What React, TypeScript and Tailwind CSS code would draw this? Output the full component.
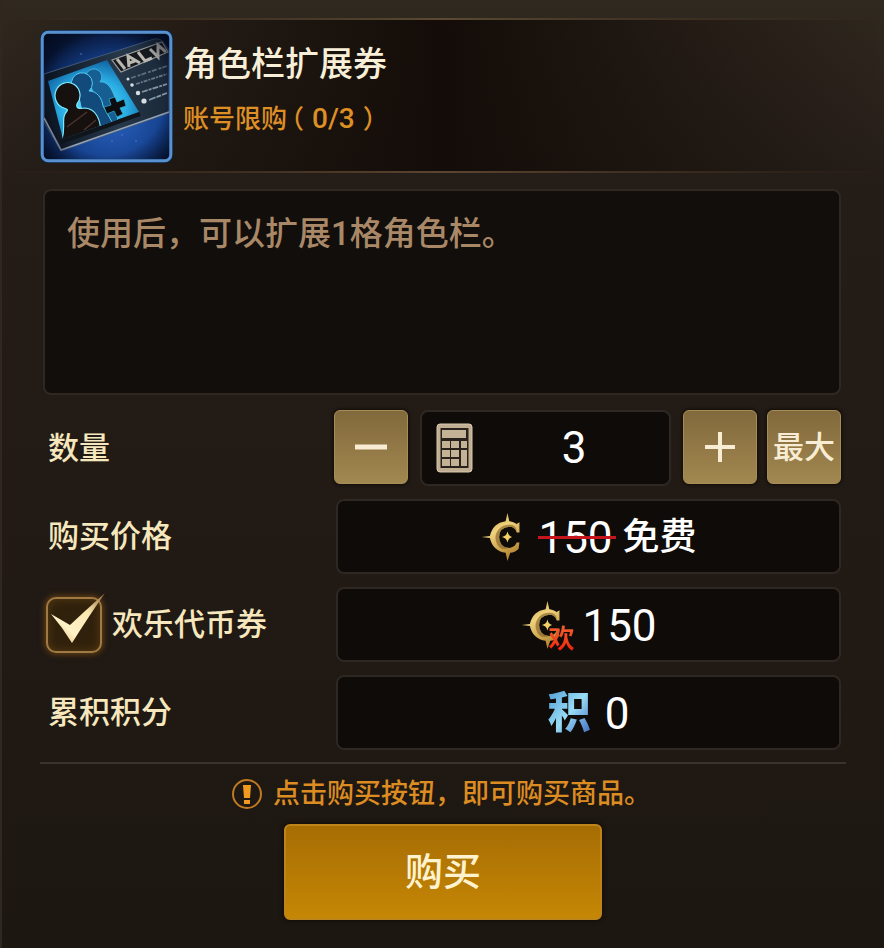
import { useState } from "react";
import type { ReactNode } from "react";

const UNIT_PRICE = 50;
const MAX_QUANTITY = 3;

function TicketArt() {
  return (
    <svg viewBox="0 0 133 133" className="size-[133px] shrink-0" role="img" aria-label="角色栏扩展券">
      <defs>
        <radialGradient id="ticketSky" cx="0.55" cy="0.65" r="0.7">
          <stop offset="0" stopColor="#2a63c0" />
          <stop offset="0.6" stopColor="#15408c" />
          <stop offset="1" stopColor="#071433" />
        </radialGradient>
        <radialGradient id="ticketPhoto" cx="0.5" cy="0.6" r="0.65">
          <stop offset="0" stopColor="#6be6ff" />
          <stop offset="0.55" stopColor="#2aaee4" />
          <stop offset="1" stopColor="#0d5798" />
        </radialGradient>
        <linearGradient id="ticketCard" x1="0" y1="0" x2="1" y2="0">
          <stop offset="0" stopColor="#0b1320" />
          <stop offset="0.6" stopColor="#26384a" />
          <stop offset="1" stopColor="#1a2838" />
        </linearGradient>
        <radialGradient id="ticketShade" cx="0.5" cy="0.5" r="0.72">
          <stop offset="0.65" stopColor="#020818" stopOpacity="0" />
          <stop offset="1" stopColor="#020818" stopOpacity="0.85" />
        </radialGradient>
        <clipPath id="ticketClip">
          <rect x="4" y="4" width="125" height="125" rx="4" />
        </clipPath>
        <clipPath id="photoClip">
          <path d="M8 51 L67 30 L99 82 L23 109 Z" />
        </clipPath>
      </defs>
      <rect x="0" y="0" width="133" height="133" rx="8" fill="#0a2547" />
      <rect x="4" y="4" width="125" height="125" rx="4" fill="url(#ticketSky)" />
      <g clipPath="url(#ticketClip)">
        <path d="M4 44 L114 9 Q121 8 124 13 L129 20 V83 L21 121 L4 92 Z" fill="url(#ticketCard)" stroke="#40587a" strokeWidth="1" />
        <path d="M8 51 L67 30 L99 82 L23 109 Z" fill="url(#ticketPhoto)" />
        <path d="M4 88 L21 120 L129 82" fill="none" stroke="#93a3b4" strokeWidth="1.6" />
        <path d="M21 112 L100 84" fill="none" stroke="#10151c" strokeWidth="4" />
        <g clipPath="url(#photoClip)">
          <path d="M50 54 A8 8 0 1 1 60 52 C67 51 72 58 75 68 L78 94 L62 98 L56 70 Z" fill="#175f93" stroke="#49bfe8" strokeWidth="0.8" />
          <path d="M38 63 A10.500 10.500 0 1 1 49 61 C57 61 62 68 63 76 L72 92 L62 104 L44 90 Z" fill="#124a7c" stroke="#54cdf2" strokeWidth="1" />
          <path d="M21 112 C27 98 20 88 27 81 C28 80 27 79 24 78 A12.500 13 0 1 1 37 74 C36 78 38 79 45 78 C56 79 61 89 61 106 L61 112 Z" fill="#16100f" stroke="#7cecff" strokeWidth="1.2" />
          <path d="M27 97 L47 82 M44 100 L56 90" stroke="#4a3430" strokeWidth="1.5" />
        </g>
        <path d="M69 69 L75 67 L77 72 L84 69 L86 76 L80 78 L83 84 L77 87 L74 81 L67 84 L64 77 L71 75 Z" fill="#0b0d10" stroke="#2fb5d8" strokeWidth="0.7" />
        <path d="M72 30 L122 12 L128 22 L81 42 Z" fill="#15191e" stroke="#9fa2a0" strokeWidth="1.2" />
        <g fill="none" stroke="#b9b7b0" strokeWidth="3">
          <path d="M77 29 L85 39" />
          <path d="M89 37 L88 26 L100 33 M89 33 L95 31" />
          <path d="M98 22 L105 31 L112 28" />
          <path d="M110 19 L118 27 L118 15 L126 22" />
        </g>
        <g fill="none" stroke="#8396a6" strokeWidth="1.800">
          <path d="M91 48 L127 36" strokeDasharray="5 2 3 1" opacity="0.6" />
          <path d="M96 54 L127 44" strokeDasharray="4 1 2 1" opacity="0.7" />
          <path d="M102 62 L127 54" strokeDasharray="6 1 3 1" />
          <path d="M109 70 L127 63" strokeDasharray="7 1 5 1" />
        </g>
        <g fill="#d8dee2">
          <circle cx="88" cy="49" r="1.500" />
          <circle cx="92" cy="55" r="1.800" />
          <circle cx="98" cy="63" r="2.200" />
          <circle cx="104" cy="71" r="2.600" />
        </g>
        <rect x="4" y="4" width="125" height="125" fill="url(#ticketShade)" />
        <g fill="#4e83da">
          <circle cx="41" cy="24" r="0.8" />
          <circle cx="96" cy="111" r="0.8" />
          <circle cx="72" cy="111" r="0.7" />
          <circle cx="82" cy="105" r="0.7" />
        </g>
      </g>
      <rect x="2.2" y="2.2" width="128.6" height="128.6" rx="6" fill="none" stroke="#5991cf" strokeWidth="3" />
    </svg>
  );
}

function CoinShape() {
  return (
    <svg viewBox="0 0 42 52" className="h-[48px] w-[42px]" aria-hidden="true">
      <defs>
        <linearGradient id="coinGold" x1="0" y1="0" x2="0.5" y2="1">
          <stop offset="0" stopColor="#b98d40" />
          <stop offset="0.45" stopColor="#efd27c" />
          <stop offset="1" stopColor="#b98a35" />
        </linearGradient>
      </defs>
      <path d="M28 0 L30 9 Q36 10 38 12 L41 10 V21 L38 21 Q36 15 30 15 Q19 16 19 26 Q19 37 30 38 Q36 37 38 32 L41 32 L40 39 Q36 43 31 43 L28 52 L26 43 Q12 41 9 27 L0 26 L9 25 Q12 11 26 9 Z" fill="url(#coinGold)" />
      <path d="M19 17 Q24 12 33 13 Q38 15 38 20 Q35 15 30 15 Q19 16 19 26 Q19 37 30 38 Q21 41 17 34 Q12 25 19 17 Z" fill="#7d5a22" opacity="0.6" />
      <path d="M28 20 Q29 25 33 26 Q29 27 28 32 Q27 27 22 26 Q27 25 28 20 Z" fill="#f2d067" />
    </svg>
  );
}

function CalculatorIcon() {
  return (
    <svg viewBox="0 0 37 50" className="h-[50px] w-[37px]" aria-hidden="true">
      <rect x="1" y="1" width="35" height="48" rx="3" fill="#bfae92" stroke="#d8c9ad" strokeWidth="1" />
      <rect x="4.500" y="5" width="28" height="40" fill="#29211b" />
      <g fill="#c3b296">
        <rect x="6" y="7" width="24" height="8" />
        <rect x="6" y="18" width="8" height="7" />
        <rect x="15" y="18" width="8" height="7" />
        <rect x="25" y="18" width="6" height="7" />
        <rect x="6" y="27" width="8" height="7" />
        <rect x="15" y="27" width="8" height="7" />
        <rect x="25" y="27" width="6" height="16" />
        <rect x="6" y="36" width="8" height="7" />
        <rect x="15" y="36" width="8" height="7" />
      </g>
    </svg>
  );
}

function StepButton({ label, onClick, children }: { label: string; onClick: () => void; children: ReactNode }) {
  return (
    <button
      type="button"
      aria-label={label}
      onClick={onClick}
      className="flex size-[74px] shrink-0 items-center justify-center rounded-md border border-[#a68c58] bg-linear-to-b from-[#82693c] to-[#a18850] text-[31px] font-medium text-[#f8edd4] shadow-[0_0_3px_1px_#120d07]"
    >
      {children}
    </button>
  );
}

function ValueBox({ children }: { children: ReactNode }) {
  return (
    <div className="flex h-[75px] items-center justify-center rounded-lg border-2 border-[#2f2721] bg-[#0e0b09] text-white">
      {children}
    </div>
  );
}

function Amount({ children }: { children: ReactNode }) {
  return <span className="block pt-[2px] text-[44px] leading-[50px] font-normal">{children}</span>;
}

export default function App() {
  const [quantity, setQuantity] = useState(3);
  const [useTicket, setUseTicket] = useState(true);
  const clamp = (n: number) => Math.min(MAX_QUANTITY, Math.max(1, n || 1));
  const total = quantity * UNIT_PRICE;

  return (
    <main className="min-h-screen border-l-2 border-[#302820] bg-linear-to-b from-[#30291f] via-[#241c17] via-20% to-[#1d1712] pt-[18px] pb-6 font-[Roboto,'Noto_Sans_CJK_SC',sans-serif] text-[#f6e7bd]">
      <header className="bg-linear-to-r from-transparent via-[#140c08] via-50% to-transparent">
        <div className="h-[2px] bg-linear-to-r from-transparent via-[#5c4a33] to-transparent" />
        <div className="flex gap-[10px] px-[38px] pt-[10px] pb-2">
          <TicketArt />
          <div className="pt-2">
            <h1 className="text-[34px] leading-[52px] font-medium text-[#f7efd8]">角色栏扩展券</h1>
            <p className="flex items-baseline pt-2 text-[26px] leading-[42px] font-medium text-[#dd8f25] [font-feature-settings:'halt']">
              <span>账号限购</span>
              <span className="ml-1">（</span>
              <span className="mx-2 text-[28px]">0/3</span>
              <span>）</span>
            </p>
          </div>
        </div>
        <div className="h-[2px] bg-linear-to-r from-transparent via-[#5c4530] to-transparent" />
      </header>

      <section className="mt-4 mr-[43px] ml-[41px] h-[206px] rounded-lg border-2 border-[#2f2822] bg-[#110e0b] px-[22px] pt-[18px]">
        <p className="text-[33px] leading-[50px] font-medium text-[#a98868]">使用后，可以扩展1格角色栏。</p>
      </section>

      <form onSubmit={(e) => e.preventDefault()} className="mt-[15px]">
        <div className="mr-[43px] ml-[41px] grid grid-cols-[287px_1fr] items-center gap-x-[6px] gap-y-[13px] text-[31px] font-medium">
          <label htmlFor="quantity" className="pt-[2px] pl-[5px]">
            数量
          </label>
          <div className="-ml-[2px] flex">
            <StepButton label="减少" onClick={() => setQuantity(clamp(quantity - 1))}>
              <svg viewBox="0 0 32 32" className="size-8" aria-hidden="true">
                <path d="M0 16 H32" stroke="currentColor" strokeWidth="5" />
              </svg>
            </StepButton>
            <div className="mx-3 flex h-[76px] min-w-0 flex-1 items-center rounded-lg border-2 border-[#2f2721] bg-[#0e0b09] pl-[14px]">
              <button type="button" aria-label="输入数量" className="shrink-0">
                <CalculatorIcon />
              </button>
              <input
                id="quantity"
                type="text"
                inputMode="numeric"
                value={quantity}
                onChange={(e) => setQuantity(clamp(Number(e.target.value)))}
                className="ml-[6px] w-full min-w-0 bg-transparent text-center text-[44px] leading-[50px] font-normal text-white outline-none"
              />
            </div>
            <StepButton label="增加" onClick={() => setQuantity(clamp(quantity + 1))}>
              <svg viewBox="0 0 32 32" className="size-8" aria-hidden="true">
                <path d="M1 16 H31 M16 1 V31" stroke="currentColor" strokeWidth="4" />
              </svg>
            </StepButton>
            <div className="w-[10px] shrink-0" />
            <StepButton label="最大" onClick={() => setQuantity(MAX_QUANTITY)}>
              <span className="pt-[2px]">最大</span>
            </StepButton>
          </div>

          <span className="pt-[2px] pl-[5px]">购买价格</span>
          <ValueBox>
            <CoinShape />
            <s className="relative mr-[10px] ml-4 no-underline after:absolute after:top-[25px] after:-right-[3px] after:left-0 after:h-[3px] after:bg-[#c4161c]">
              <Amount>{total}</Amount>
            </s>
            <span className="pt-[2px] text-[37px] leading-[50px]">免费</span>
          </ValueBox>

          <label className="flex cursor-pointer items-center gap-[10px] pl-[3px]">
            <span className="relative block size-[56px]">
              <input
                type="checkbox"
                checked={useTicket}
                onChange={(e) => setUseTicket(e.target.checked)}
                className="peer block size-[56px] appearance-none rounded-[10px] border-2 border-[#a07a42] bg-[#30210c] shadow-[0_0_6px_1px_#6b4513,inset_0_0_10px_#563a12]"
              />
              <svg viewBox="0 0 60 60" className="pointer-events-none absolute -top-1 left-0 hidden size-[60px] peer-checked:block" aria-hidden="true">
                <defs>
                  <linearGradient id="tick" x1="1" y1="0" x2="0" y2="1">
                    <stop offset="0" stopColor="#8d6430" />
                    <stop offset="0.35" stopColor="#fbe7b0" />
                    <stop offset="0.7" stopColor="#fff2c8" />
                    <stop offset="1" stopColor="#dcaa55" />
                  </linearGradient>
                </defs>
                <path d="M5 21 L24 32 Q40 17 59 0 Q43 23 26 50 Q17 35 5 21 Z" fill="url(#tick)" />
              </svg>
            </span>
            <span className="pt-[2px]">欢乐代币券</span>
          </label>
          <ValueBox>
            <span className="relative mr-5">
              <CoinShape />
              <span className="absolute top-[24px] left-[28px] bg-linear-to-b from-[#f0602d] to-[#f01005] bg-clip-text text-[26px] leading-[28px] font-bold text-transparent">
                欢
              </span>
            </span>
            <Amount>{total}</Amount>
          </ValueBox>

          <span className="pt-[2px] pl-[5px]">累积积分</span>
          <ValueBox>
            <span className="mr-[14px] bg-linear-to-br from-[#4b9bd3] via-[#9adcf5] to-[#3c5fb8] bg-clip-text text-[43px] leading-[50px] font-black text-transparent">
              积
            </span>
            <Amount>0</Amount>
          </ValueBox>
        </div>

        <hr className="mx-[38px] mt-3 h-[2px] border-0 bg-[#3b322b]" />

        <p className="mt-[10px] flex items-center justify-center gap-[10px] pr-1 text-[27px] leading-[40px] font-medium text-[#dd8c22]">
          <svg viewBox="0 0 32 32" className="size-8" fill="none" aria-hidden="true">
            <circle cx="16" cy="16" r="14" stroke="#c27a22" strokeWidth="2" />
            <path d="M12 7 H20 L19 20 H13 Z" fill="#f09b20" />
            <rect x="13" y="22" width="6" height="4" fill="#f09b20" />
          </svg>
          点击购买按钮，即可购买商品。
        </p>

        <button
          type="submit"
          className="mx-auto mt-[10px] block h-24 w-[318px] rounded-md border-2 border-[#bd8419] bg-linear-to-b from-[#a66d04] to-[#c68705] text-[38px] font-medium text-[#fff3cf] shadow-[0_0_4px_1px_#120c06]"
        >
          购买
        </button>
      </form>
    </main>
  );
}
